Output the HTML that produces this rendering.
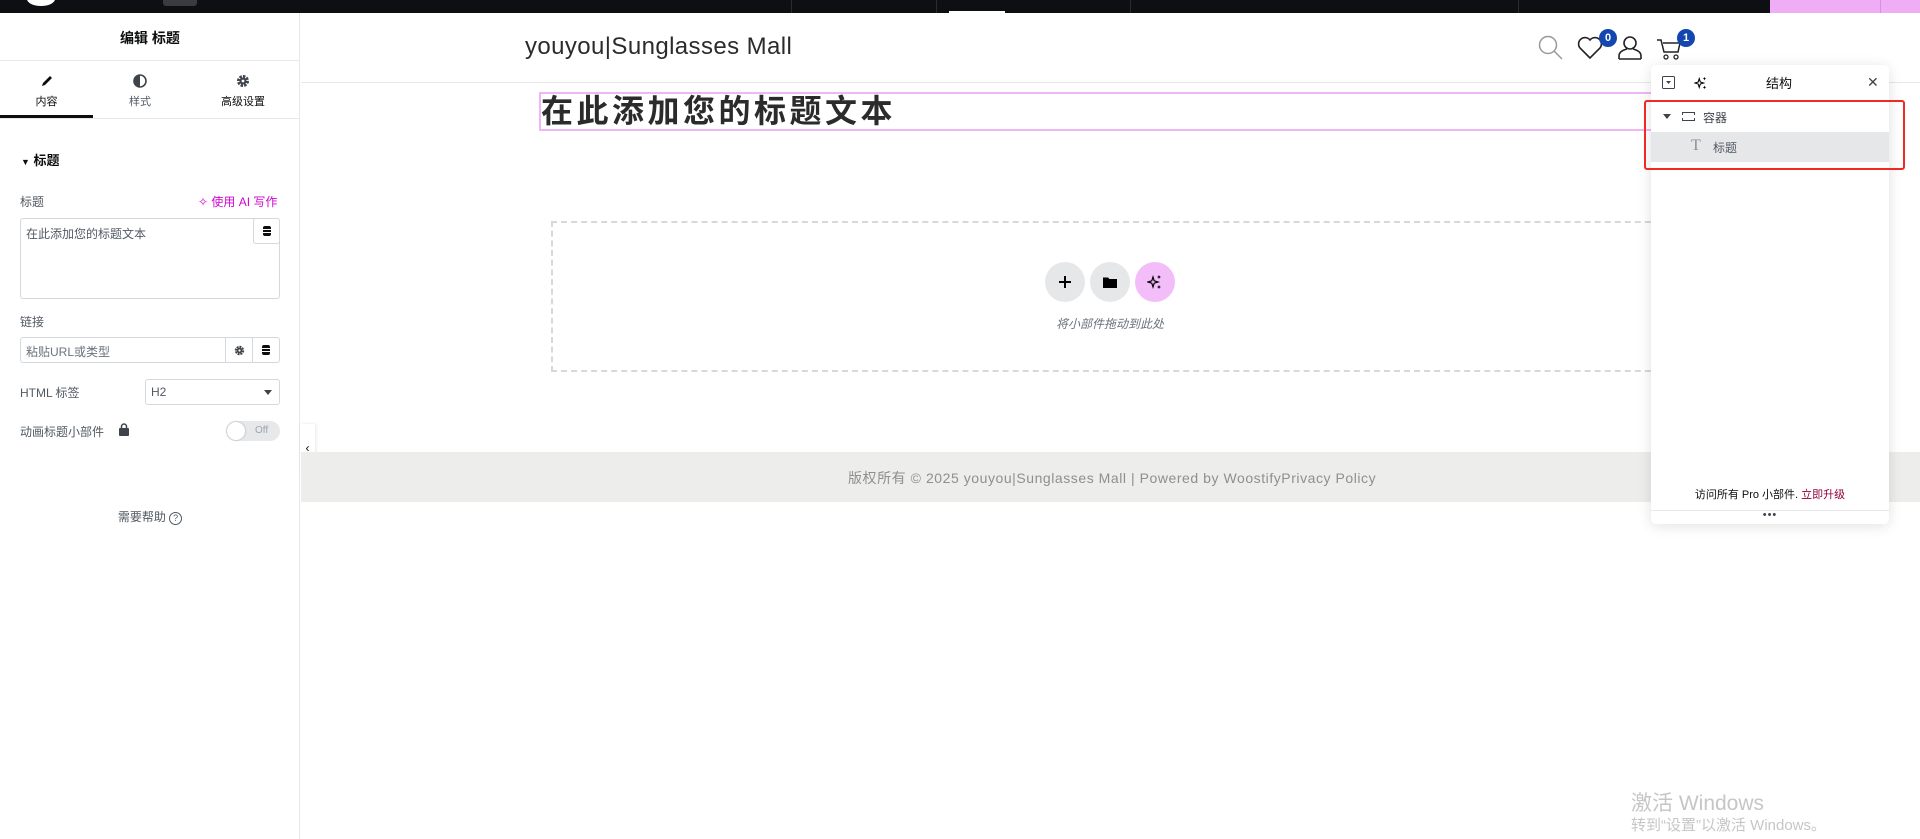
<!DOCTYPE html>
<html><head><meta charset="utf-8"><style>
*{box-sizing:border-box;margin:0;padding:0}
body{width:1920px;height:839px;overflow:hidden;background:#fff;font-family:"Liberation Sans","Noto Sans CJK SC",sans-serif;position:relative;color:#333}
.a{position:absolute}
.top{left:0;top:0;width:1920px;height:13px;background:#0e0f12}
.side{left:0;top:13px;width:300px;height:826px;background:#fff;border-right:1px solid #e6e8ea}
.lbl{font-size:12px;color:#515962}
.inp{border:1px solid #d5d8dc;border-radius:3px;background:#fff}
.btn{border-left:1px solid #d5d8dc;display:flex;align-items:center;justify-content:center}
.circ{width:40px;height:40px;border-radius:50%;background:#e6e7e9;display:flex;align-items:center;justify-content:center}
.badge{width:18px;height:18px;border-radius:50%;background:#1346af;color:#fff;font-size:11px;font-weight:bold;display:flex;align-items:center;justify-content:center}
</style></head><body>
<div class="a top"></div>
<div class="a" style="left:27px;top:-8px;width:28px;height:14px;border-radius:50%;background:#fff"></div>
<div class="a" style="left:163px;top:0;width:34px;height:6px;border-radius:0 0 3px 3px;background:#3a3b3e"></div>
<div class="a" style="left:791px;top:0;width:1px;height:13px;background:#2a2b2e"></div>
<div class="a" style="left:936px;top:0;width:1px;height:13px;background:#2a2b2e"></div>
<div class="a" style="left:1130px;top:0;width:1px;height:13px;background:#2a2b2e"></div>
<div class="a" style="left:1518px;top:0;width:1px;height:13px;background:#2a2b2e"></div>
<div class="a" style="left:949px;top:11px;width:56px;height:2px;background:#fff"></div>
<div class="a" style="left:1770px;top:0;width:150px;height:13px;background:#efadf5"></div>
<div class="a" style="left:1880px;top:0;width:1px;height:13px;background:#e08ae8"></div>

<div class="a side">
 <div class="a" style="left:0;top:15px;width:300px;text-align:center;font-size:14px;font-weight:bold;color:#0c0d0e">编辑 标题</div>
 <div class="a" style="left:0;top:47px;width:300px;height:1px;background:#e6e8ea"></div>
 <svg class="a" style="left:40px;top:61px" width="14" height="14" viewBox="0 0 14 14"><path d="M2 12l1-3 7-7 2 2-7 7z" fill="#0c0d0e"/></svg>
 <div class="a" style="left:0;top:80px;width:93px;text-align:center;font-size:11px;color:#0c0d0e">内容</div>
 <svg class="a" style="left:133px;top:61px" width="14" height="14" viewBox="0 0 14 14"><circle cx="7" cy="7" r="6" fill="none" stroke="#3f444b" stroke-width="1.6"/><path d="M7 1a6 6 0 0 0 0 12z" fill="#3f444b"/></svg>
 <div class="a" style="left:93px;top:80px;width:94px;text-align:center;font-size:11px;color:#515962">样式</div>
 <svg class="a" style="left:236px;top:61px" width="14" height="14" viewBox="0 0 14 14"><circle cx="7" cy="7" r="4.5" fill="none" stroke="#3f444b" stroke-width="3" stroke-dasharray="2.4 1.1"/><circle cx="7" cy="7" r="3.5" fill="#3f444b"/><circle cx="7" cy="7" r="1.4" fill="#fff"/></svg>
 <div class="a" style="left:190px;top:80px;width:106px;text-align:center;font-size:11px;color:#0c0d0e">高级设置</div>
 <div class="a" style="left:0;top:102px;width:93px;height:3px;background:#0c0d0e"></div>
 <div class="a" style="left:0;top:105px;width:300px;height:1px;background:#e6e8ea"></div>
 <div class="a" style="left:21px;top:137px;font-size:13px;font-weight:bold;color:#0c0d0e"><span style="font-size:9px">▼</span> 标题</div>
 <div class="a lbl" style="left:20px;top:180px">标题</div>
 <div class="a" style="left:198px;top:180px;font-size:12px;color:#d004d4">✧ 使用 AI 写作</div>
 <div class="a inp" style="left:20px;top:205px;width:260px;height:81px"></div>
 <div class="a" style="left:26px;top:212px;font-size:12px;color:#515962">在此添加您的标题文本</div>
 <div class="a inp" style="left:253px;top:205px;width:27px;height:26px;display:flex;align-items:center;justify-content:center"><svg width="10" height="12"><rect x="1" y="1" width="8" height="10" rx="2" fill="#0c0d0e"/><path d="M1 4.5h8M1 7.5h8" stroke="#fff"/></svg></div>
 <div class="a lbl" style="left:20px;top:300px">链接</div>
 <div class="a inp" style="left:20px;top:324px;width:260px;height:26px"></div>
 <div class="a" style="left:26px;top:330px;font-size:12px;color:#69727d">粘贴URL或类型</div>
 <div class="a btn" style="left:225px;top:325px;width:28px;height:24px"><svg width="11" height="11" viewBox="0 0 14 14"><circle cx="7" cy="7" r="4.5" fill="none" stroke="#3f444b" stroke-width="3" stroke-dasharray="2.4 1.1"/><circle cx="7" cy="7" r="3.5" fill="#3f444b"/><circle cx="7" cy="7" r="1.4" fill="#fff"/></svg></div>
 <div class="a btn" style="left:252px;top:325px;width:27px;height:24px"><svg width="10" height="12"><rect x="1" y="1" width="8" height="10" rx="2" fill="#0c0d0e"/><path d="M1 4.5h8M1 7.5h8" stroke="#fff"/></svg></div>
 <div class="a lbl" style="left:20px;top:371px;font-size:12px">HTML 标签</div>
 <div class="a inp" style="left:145px;top:366px;width:135px;height:26px"></div>
 <div class="a" style="left:151px;top:372px;font-size:12px;color:#515962">H2</div>
 <div class="a" style="left:264px;top:377px;width:0;height:0;border-left:4px solid transparent;border-right:4px solid transparent;border-top:5px solid #3f444b"></div>
 <div class="a lbl" style="left:20px;top:410px">动画标题小部件</div>
 <svg class="a" style="left:118px;top:410px" width="12" height="13"><rect x="1" y="5" width="10" height="8" rx="1" fill="#3f444b"/><path d="M3.5 5V3.5a2.5 2.5 0 0 1 5 0V5" stroke="#3f444b" stroke-width="1.5" fill="none"/></svg>
 <div class="a" style="left:226px;top:408px;width:54px;height:20px;border-radius:10px;background:#e6e8ea"></div>
 <div class="a" style="left:227px;top:409px;width:18px;height:18px;border-radius:50%;background:#fff;box-shadow:0 0 2px rgba(0,0,0,.3)"></div>
 <div class="a" style="left:255px;top:412px;font-size:10px;color:#9da5ae">Off</div>
 <div class="a" style="left:0;top:495px;width:300px;text-align:center;font-size:12px;color:#515962">需要帮助 <span style="display:inline-block;width:13px;height:13px;border:1px solid #515962;border-radius:50%;font-size:9px;line-height:11px">?</span></div>
</div>
<div class="a" style="left:300px;top:424px;width:15px;height:49px;background:#fff;box-shadow:1px 0 3px rgba(0,0,0,.1);font-size:12px;line-height:49px;text-align:center;color:#0c0d0e">‹</div>

<div class="a" style="left:525px;top:33px;font-size:24px;color:#2b2b2b;letter-spacing:0.4px">youyou|Sunglasses Mall</div>
<div class="a" style="left:301px;top:82px;width:1619px;height:1px;background:#e8e8e8"></div>
<svg class="a" style="left:1538px;top:35px" width="26" height="26" viewBox="0 0 26 26"><circle cx="10" cy="10" r="8.5" fill="none" stroke="#999" stroke-width="1.5"/><path d="M16 16l8 8" stroke="#999" stroke-width="1.5"/></svg>
<svg class="a" style="left:1577px;top:36px" width="26" height="24" viewBox="0 0 26 24"><path d="M13 22L3 12a5.5 5.5 0 0 1 10-8 5.5 5.5 0 0 1 10 8z" fill="none" stroke="#222" stroke-width="1.6"/></svg>
<div class="a badge" style="left:1599px;top:29px">0</div>
<svg class="a" style="left:1617px;top:34px" width="26" height="26" viewBox="0 0 26 26"><circle cx="13" cy="9" r="6" fill="none" stroke="#222" stroke-width="1.6"/><path d="M2 25v-3c0-4 4-6 8-7M24 25v-3c0-4-4-6-8-7M2 25h22" fill="none" stroke="#222" stroke-width="1.6"/></svg>
<svg class="a" style="left:1656px;top:38px" width="26" height="22" viewBox="0 0 26 22"><path d="M1 2h4l3 12h14l2-9H7" fill="none" stroke="#222" stroke-width="1.5"/><circle cx="10" cy="19" r="2" fill="none" stroke="#222" stroke-width="1.3"/><circle cx="20" cy="19" r="2" fill="none" stroke="#222" stroke-width="1.3"/></svg>
<div class="a badge" style="left:1677px;top:29px">1</div>

<div class="a" style="left:539px;top:92px;width:1120px;height:39px;border:2px solid #f0b7f5"></div>
<div class="a" style="left:541px;top:92px;font-size:32px;font-weight:bold;color:#2b2b2b;letter-spacing:3.5px;line-height:38px">在此添加您的标题文本</div>

<div class="a" style="left:551px;top:221px;width:1140px;height:151px;border:2px dashed #d5d8dc"></div>
<div class="a circ" style="left:1045px;top:262px"><svg width="14" height="14"><path d="M7 1v12M1 7h12" stroke="#000" stroke-width="2"/></svg></div>
<div class="a circ" style="left:1090px;top:262px"><svg width="14" height="12"><path d="M0 1.5h5l1.5 1.5H14v9H0z" fill="#000"/></svg></div>
<div class="a circ" style="left:1135px;top:262px;background:#f2bdf9"><svg width="16" height="16" viewBox="0 0 16 16"><path d="M6 3l1.2 3.8L11 8l-3.8 1.2L6 13l-1.2-3.8L1 8l3.8-1.2z" fill="none" stroke="#000" stroke-width="1.2"/><path d="M12 1l.6 1.4L14 3l-1.4.6L12 5l-.6-1.4L10 3l1.4-.6zM12 11l.6 1.4 1.4.6-1.4.6L12 15l-.6-1.4L10 13l1.4-.6z" fill="#000"/></svg></div>
<div class="a" style="left:1010px;top:315px;width:200px;text-align:center;font-size:12px;font-style:italic;color:#69727d">将小部件拖动到此处</div>

<div class="a" style="left:301px;top:452px;width:1619px;height:50px;background:#ededeb"></div>
<div class="a" style="left:848px;top:468px;font-size:14px;color:#8f8f8f;letter-spacing:0.55px;white-space:nowrap">版权所有 © 2025 youyou|Sunglasses Mall | Powered by WoostifyPrivacy Policy</div>

<div class="a" style="left:1651px;top:65px;width:238px;height:459px;background:#fff;border-radius:5px;box-shadow:0 2px 14px rgba(0,0,0,.12)"></div>
<svg class="a" style="left:1662px;top:76px" width="13" height="13"><rect x=".5" y=".5" width="12" height="12" rx="1" fill="none" stroke="#3f444b"/><path d="M4 5h5l-2.5 3z" fill="#3f444b"/></svg>
<svg class="a" style="left:1694px;top:76px" width="14" height="14" viewBox="0 0 16 16"><path d="M6 3l1.2 3.8L11 8l-3.8 1.2L6 13l-1.2-3.8L1 8l3.8-1.2z" fill="none" stroke="#000" stroke-width="1.2"/><path d="M12 1l.6 1.4L14 3l-1.4.6L12 5l-.6-1.4L10 3l1.4-.6zM12 11l.6 1.4 1.4.6-1.4.6L12 15l-.6-1.4L10 13l1.4-.6z" fill="#000"/></svg>
<div class="a" style="left:1751px;top:73px;width:56px;text-align:center;font-size:13px;color:#0c0d0e">结构</div>
<div class="a" style="left:1867px;top:74px;font-size:14px;color:#3f444b">✕</div>
<div class="a" style="left:1663px;top:114px;width:0;height:0;border-left:4px solid transparent;border-right:4px solid transparent;border-top:5px solid #3f444b"></div>
<div class="a" style="left:1682px;top:112px;width:13px;height:9px;border:1px dashed #3f444b;border-top-style:solid;border-bottom-style:solid"></div>
<div class="a" style="left:1703px;top:109px;font-size:12px;color:#3f444b">容器</div>
<div class="a" style="left:1651px;top:132px;width:238px;height:30px;background:#e6e7e9"></div>
<div class="a" style="left:1691px;top:137px;font-size:16px;color:#8a8f96;font-family:'Liberation Serif',serif">T</div>
<div class="a" style="left:1713px;top:139px;font-size:12px;color:#515962">标题</div>
<div class="a" style="left:1644px;top:100px;width:261px;height:70px;border:2px solid #f02a22;border-radius:3px"></div>
<div class="a" style="left:1651px;top:486px;width:238px;text-align:center;font-size:11px;color:#0c0d0e">访问所有 Pro 小部件. <span style="color:#93003f">立即升级</span></div>
<div class="a" style="left:1651px;top:510px;width:238px;height:1px;background:#e6e8ea"></div>
<div class="a" style="left:1651px;top:509px;width:238px;text-align:center;font-size:11px;color:#3f444b;letter-spacing:1px">•••</div>
<div class="a" style="left:1631px;top:787px;font-size:21px;color:#c6c6c6">激活 Windows</div>
<div class="a" style="left:1631px;top:814px;font-size:15px;color:#c6c6c6">转到“设置”以激活 Windows。</div>
</body></html>
